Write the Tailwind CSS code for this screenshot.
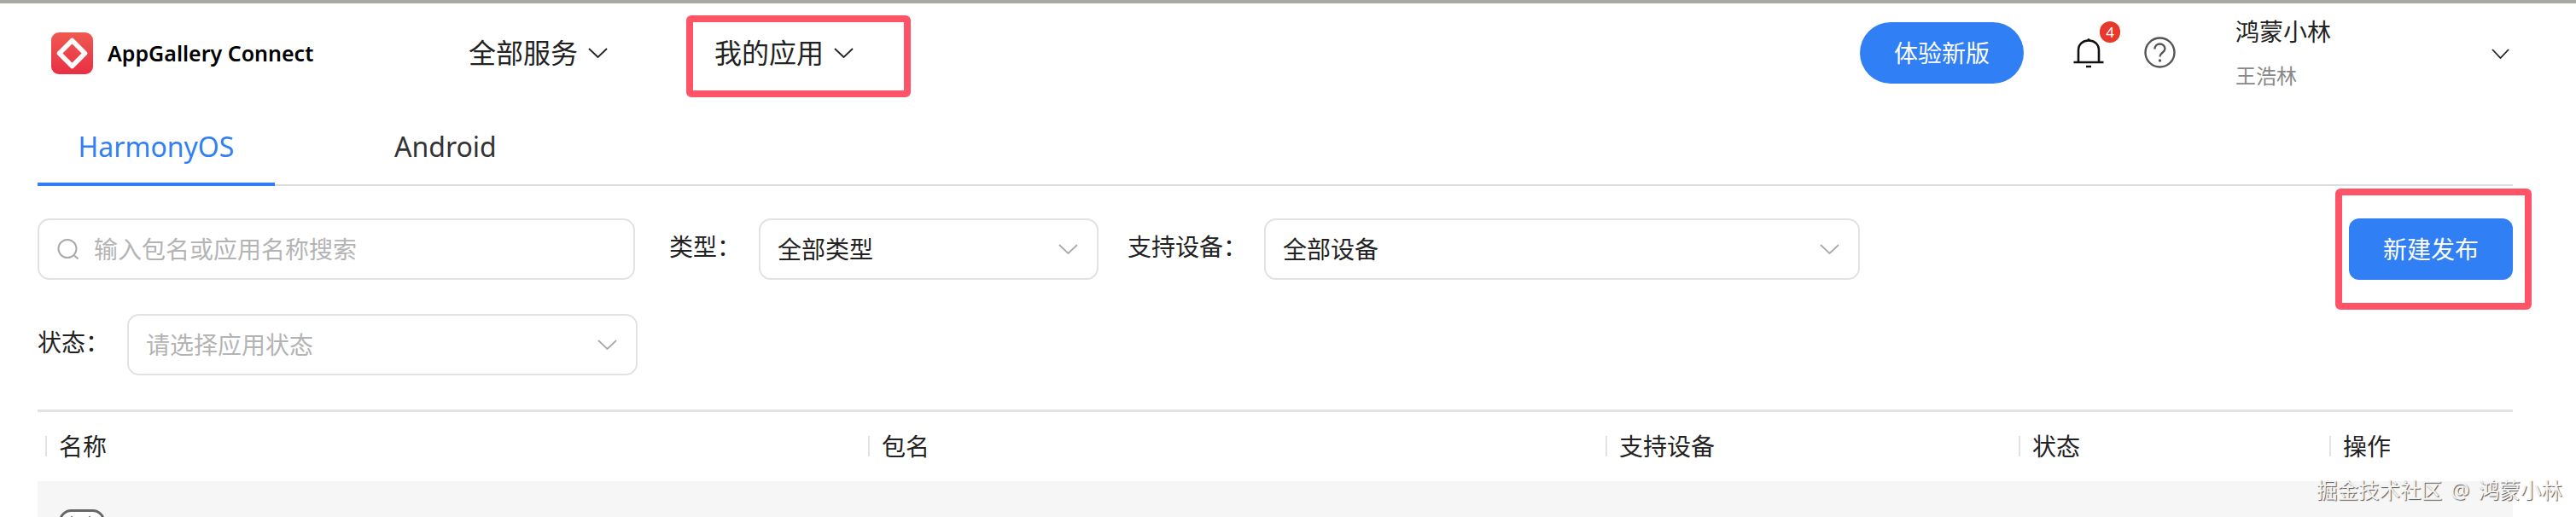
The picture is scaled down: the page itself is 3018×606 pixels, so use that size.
<!DOCTYPE html>
<html lang="zh-CN">
<head>
    <meta charset="UTF-8">
    <title>AppGallery Connect</title>
    <script src="https://cdn.jsdelivr.net/npm/@tailwindcss/browser@4"></script>
</head>
<body class="relative h-[606px] overflow-hidden bg-white text-[28px] text-[#222] font-['Noto_Sans','Noto_Sans_CJK_SC',sans-serif]">
    <div class="h-1 bg-[#a8a9a4]"></div>

    <!-- top nav -->
    <header class="flex h-[110px] items-start">
        <div class="ml-[60px] mt-[34px] flex w-[489px] shrink-0 items-center">
            <svg class="h-[49px] w-[49px]" viewBox="0 0 49 49">
                <defs>
                    <linearGradient id="logoBg" x1="0" y1="0" x2="0" y2="1">
                        <stop offset="0" stop-color="#ee5a50"/>
                        <stop offset="1" stop-color="#e92f45"/>
                    </linearGradient>
                </defs>
                <rect width="49" height="49" rx="9" fill="url(#logoBg)"/>
                <path d="M24.5 9.500 L39.500 24.500 L24.500 39.500 L9.500 24.500 Z" fill="none" stroke="#fff" stroke-width="5.500" stroke-linejoin="round"/>
            </svg>
            <span class="ml-[17px] text-[25px] font-semibold leading-none whitespace-nowrap text-black">AppGallery Connect</span>
        </div>
        <div class="mt-[36px] flex w-[255px] shrink-0 items-center text-[32px] leading-[44px]">
            <span class="whitespace-nowrap">全部服务</span>
            <svg class="ml-[12px] h-[12px] w-[23px]" viewBox="0 0 23 12" fill="none" stroke="#222" stroke-width="1.800"><path d="M1 1l10.500 10L22 1"/></svg>
        </div>
        <div class="mt-[14px] flex h-[96px] w-[263px] shrink-0 items-start rounded-[6px] border-[8px] border-[#ff5468] pl-[25px] pt-[14px] text-[32px] leading-[44px]">
            <span class="whitespace-nowrap">我的应用</span>
            <svg class="ml-[12px] mt-[16px] h-[12px] w-[23px]" viewBox="0 0 23 12" fill="none" stroke="#222" stroke-width="1.800"><path d="M1 1l10.500 10L22 1"/></svg>
        </div>
        <div class="ml-[1112px] mt-[22px] flex h-[72px] w-[192px] shrink-0 items-center justify-center rounded-full bg-[#317ff5] text-white">体验新版</div>
        <div class="relative ml-[58px] mt-[40px] h-[36px] w-[36px] shrink-0">
            <svg class="h-[36px] w-[36px]" viewBox="0 0 36 36" fill="none" stroke="#111" stroke-width="2.600">
                <path d="M6 29V15C6 8 11 3.500 18 3.500S30 8 30 15V29"/>
                <path d="M0.500 29H35.500"/>
                <circle cx="18" cy="2.500" r="1.600" fill="#111" stroke="none"/>
                <path d="M15 34h6" stroke-width="2.400"/>
            </svg>
            <span class="absolute left-[31px] top-[-19px] flex h-[25px] w-[24px] items-center justify-center rounded-full bg-[#e8382b] text-[17px] leading-none text-white">4</span>
        </div>
        <svg class="ml-[47px] mt-[39px] h-[37px] w-[37px] shrink-0" viewBox="0 0 37 37" fill="none" stroke="#555" stroke-width="2.400">
            <circle cx="18.500" cy="18.500" r="17"/>
            <path d="M12.500 14.500c0-3.600 2.700-6 6-6s6 2.400 6 5.500c0 4.500-6 4.500-6 9.500"/>
            <circle cx="18.500" cy="28" r="1.700" fill="#555" stroke="none"/>
        </svg>
        <div class="ml-[70px] flex w-[300px] shrink-0 flex-col">
            <span class="mt-[13px] leading-[40px]">鸿蒙小林</span>
            <span class="mt-[15px] text-[24px] leading-[34px] text-[#888]">王浩林</span>
        </div>
        <svg class="mt-[53px] h-[12px] w-[21px] shrink-0" viewBox="0 0 21 12" fill="none" stroke="#222" stroke-width="1.800"><path d="M1 1l9.500 10L20 1"/></svg>
    </header>

    <div class="ml-[44px] w-[2900px]">
        <!-- tabs -->
        <nav class="flex h-[104px] items-end border-b-[2px] border-[#dcdcdc]">
            <div class="mb-[-2px] flex h-[102px] w-[278px] items-center justify-center border-b-[4px] border-[#317ff5] pt-[14px] text-[32px] text-[#317ff5]">HarmonyOS</div>
            <div class="flex h-[100px] items-center pl-[140px] pt-[12px] text-[32px] text-[#333]">Android</div>
        </nav>

        <!-- filters -->
        <section class="mt-[38px] flex h-[72px] items-center">
            <div class="flex h-[72px] w-[700px] shrink-0 items-center rounded-[14px] border-[2px] border-[#e2e2e2] pl-[21px]">
                <svg class="h-[24px] w-[27px]" viewBox="0 0 27 24" fill="none" stroke="#aaa" stroke-width="2"><circle cx="12" cy="11.500" r="10.500"/><path d="M20 19.500l4.500 4"/></svg>
                <span class="ml-[16px] text-[#b4b4b4]">输入包名或应用名称搜索</span>
            </div>
            <span class="ml-[40px] w-[105px] shrink-0 pb-[6px]">类型：</span>
            <div class="flex h-[72px] w-[398px] shrink-0 items-center justify-between rounded-[14px] border-[2px] border-[#e2e2e2] pl-[20px] pr-[22px]">
                <span>全部类型</span>
                <svg class="h-[12px] w-[23px]" viewBox="0 0 23 12" fill="none" stroke="#aaa" stroke-width="1.800"><path d="M1 1l10.500 10L22 1"/></svg>
            </div>
            <span class="ml-[34px] w-[160px] shrink-0 pb-[6px]">支持设备：</span>
            <div class="flex h-[72px] w-[698px] shrink-0 items-center justify-between rounded-[14px] border-[2px] border-[#e2e2e2] pl-[20px] pr-[22px]">
                <span>全部设备</span>
                <svg class="h-[12px] w-[23px]" viewBox="0 0 23 12" fill="none" stroke="#aaa" stroke-width="1.800"><path d="M1 1l10.500 10L22 1"/></svg>
            </div>
            <div class="ml-auto flex h-[142px] w-[230px] shrink-0 translate-x-[22px] items-center rounded-[6px] border-[8px] border-[#ff5468] pl-[8px]">
                <button class="flex h-[72px] w-[192px] items-center justify-center rounded-[12px] bg-[#317ff5] text-white">新建发布</button>
            </div>
        </section>

        <section class="mt-[40px] flex h-[72px] items-center">
            <span class="w-[105px] shrink-0 pb-[6px]">状态：</span>
            <div class="flex h-[72px] w-[598px] shrink-0 items-center justify-between rounded-[14px] border-[2px] border-[#e2e2e2] pl-[20px] pr-[22px]">
                <span class="text-[#b4b4b4]">请选择应用状态</span>
                <svg class="h-[12px] w-[23px]" viewBox="0 0 23 12" fill="none" stroke="#aaa" stroke-width="1.800"><path d="M1 1l10.500 10L22 1"/></svg>
            </div>
        </section>

        <!-- table -->
        <div class="mt-[40px] grid h-[84px] grid-cols-[964px_864px_484px_364px_1fr] items-center border-t-[3px] border-[#e2e2e2] pb-[6px] pl-[9px] pt-[4px]">
            <div class="flex h-[24px] items-center border-l-[2px] border-[#e2e2e2] pl-[14px]">名称</div>
            <div class="flex h-[24px] items-center border-l-[2px] border-[#e2e2e2] pl-[14px]">包名</div>
            <div class="flex h-[24px] items-center border-l-[2px] border-[#e2e2e2] pl-[14px]">支持设备</div>
            <div class="flex h-[24px] items-center border-l-[2px] border-[#e2e2e2] pl-[14px]">状态</div>
            <div class="flex h-[24px] items-center border-l-[2px] border-[#e2e2e2] pl-[14px]">操作</div>
        </div>
        <div class="h-[42px] overflow-hidden bg-[#f6f6f6] pl-[25px] pt-[33px]">
            <svg class="h-[54px] w-[54px]" viewBox="0 0 54 54" fill="#fff" stroke="#666" stroke-width="3">
                <rect x="1.500" y="1.500" width="51" height="51" rx="13"/>
                <circle cx="15" cy="9" r="1.200" fill="#888" stroke="none"/>
                <circle cx="36" cy="9" r="1.200" fill="#888" stroke="none"/>
            </svg>
        </div>
    </div>

    <span class="absolute left-[2714px] top-[557px] text-[24.500px] whitespace-nowrap text-[#f4f4f4] [word-spacing:4px] [text-shadow:1px_1px_1px_#555]">掘金技术社区 @ 鸿蒙小林</span>
</body>
</html>
